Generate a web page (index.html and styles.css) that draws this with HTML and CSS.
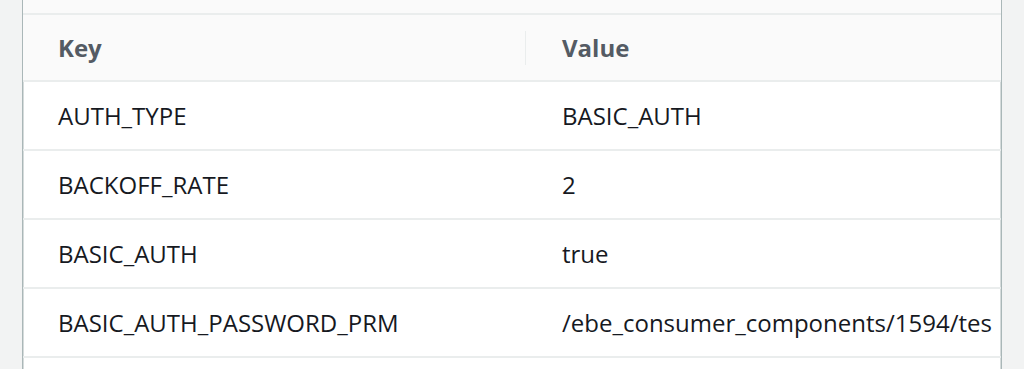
FILE: index.html
```html
<!DOCTYPE html>
<html>
<head>
<meta charset="utf-8">
<link rel="stylesheet" href="styles.css">
</head>
<body>
<div class="page">
  <div class="panel">
    <div class="top-band"></div>
    <div class="row head">
      <div class="cell key">Key</div>
      <div class="divider"></div>
      <div class="cell val">Value</div>
    </div>
    <div class="row">
      <div class="cell key">AUTH_TYPE</div>
      <div class="cell val">BASIC_AUTH</div>
    </div>
    <div class="row">
      <div class="cell key">BACKOFF_RATE</div>
      <div class="cell val">2</div>
    </div>
    <div class="row">
      <div class="cell key">BASIC_AUTH</div>
      <div class="cell val">true</div>
    </div>
    <div class="row">
      <div class="cell key">BASIC_AUTH_PASSWORD_PRM</div>
      <div class="cell val">/ebe_consumer_components/1594/tes</div>
    </div>
    <div class="row"></div>
  </div>
</div>
</body>
</html>
```
FILE: styles.css
```css
html, body {
  margin: 0;
  padding: 0;
  background: #f2f3f3;
  height: 369px;
  overflow: hidden;
}
.page {
  display: flex;
  padding: 0 22px 0 22px;
  height: 369px;
}
.panel {
  flex: 1;
  background: #ffffff;
  border-left: 1px solid #aab7b8;
  border-right: 1px solid #aab7b8;
  box-shadow: inset 1px 0 0 #d5dbdb, inset -1px 0 0 #d5dbdb;
  font-family: "Open Sans", "Noto Sans", sans-serif;
  font-size: 24px;
  color: #16191f;
  overflow: hidden;
}
.top-band {
  height: 13px;
  background: #fafafa;
  border-bottom: 2px solid #eaeded;
}
.row {
  display: flex;
  align-items: center;
  height: 67px;
  border-bottom: 2px solid #eaeded;
}
.row.head {
  height: 65px;
  background: #fafafa;
  font-weight: 700;
  color: #545b64;
}
.cell {
  white-space: nowrap;
  overflow: hidden;
}
.key {
  width: 503px;
  padding-left: 35px;
  box-sizing: border-box;
  flex: none;
}
.row.head .key {
  width: 502px;
}
.divider {
  width: 1px;
  height: 34px;
  background: #eaeded;
  flex: none;
}
.val {
  flex: 1;
  min-width: 0;
  padding-left: 36px;
  padding-right: 11px;
}
```
